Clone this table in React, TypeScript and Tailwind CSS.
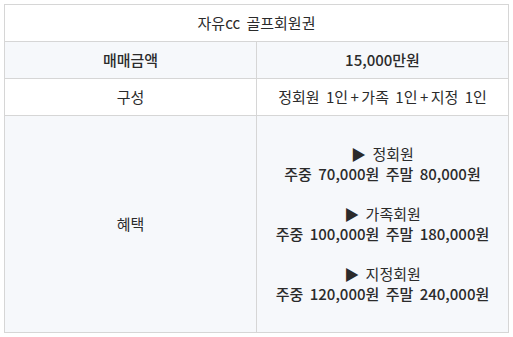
import React from "react";

export default function App() {
  const font = { fontFamily: '"Noto Sans CJK KR", "Noto Sans", sans-serif' };
  const td = "border border-[#d6d6d6] text-center align-middle p-0";
  const Plus = () => <span className="mx-[2.5px]">+</span>;
  return (
    <div className="w-[513px] h-[337px] bg-white pt-[4px] pl-[4px]" style={font}>
      <table className="border-collapse w-[505px] text-[15px] leading-[20px] text-[#2b2b2b] [word-spacing:3px]">
        <tbody>
          <tr>
            <td colSpan={2} className={`${td} h-[37px] bg-white`}>자유cc 골프회원권</td>
          </tr>
          <tr className="bg-[#f6f8fb]">
            <td className={`${td} h-[37px] w-[252px] font-medium`}>매매금액</td>
            <td className={`${td} h-[37px] font-medium`}>15,000만원</td>
          </tr>
          <tr className="bg-white">
            <td className={`${td} h-[37px]`}>구성</td>
            <td className={`${td} h-[37px]`}>
              정회원 1인<Plus />가족 1인<Plus />지정 1인
            </td>
          </tr>
          <tr className="bg-[#f6f8fb]">
            <td className={`${td} h-[217px]`}>혜택</td>
            <td className={td}>
              <div>▶ 정회원</div>
              <div className="font-medium">주중 70,000원 주말 80,000원</div>
              <div className="h-[20px]" />
              <div>▶ 가족회원</div>
              <div className="font-medium">주중 100,000원 주말 180,000원</div>
              <div className="h-[20px]" />
              <div>▶ 지정회원</div>
              <div className="font-medium">주중 120,000원 주말 240,000원</div>
            </td>
          </tr>
        </tbody>
      </table>
    </div>
  );
}
